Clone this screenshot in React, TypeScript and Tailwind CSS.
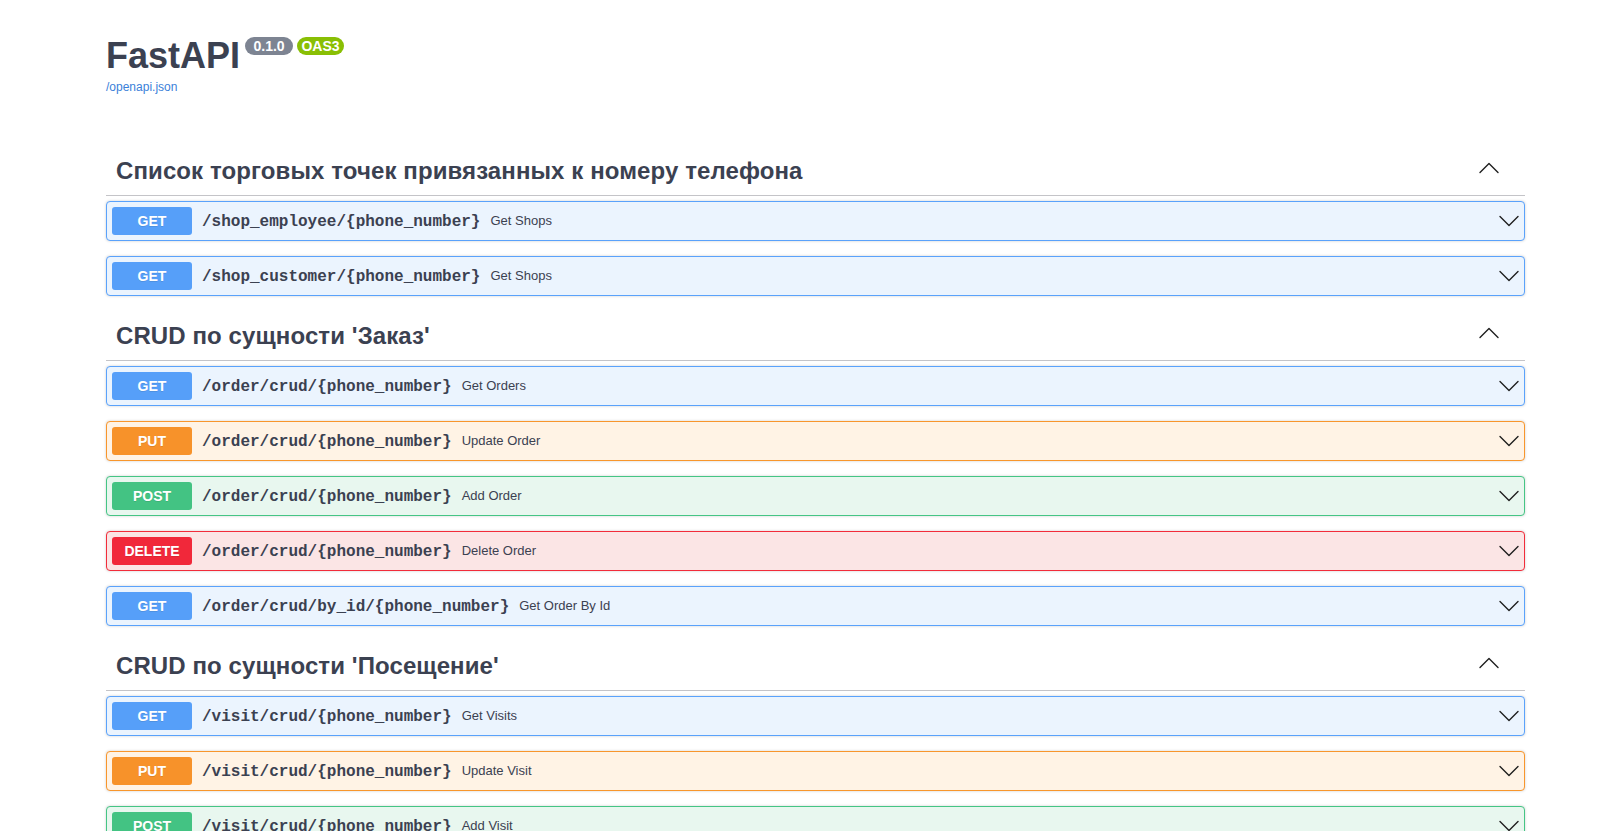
import React from "react";

type Method = "GET" | "PUT" | "POST" | "DELETE";

type Operation = {
  method: Method;
  path: string;
  summary: string;
};

type Tag = {
  title: string;
  ops: Operation[];
};

const METHOD_STYLES: Record<Method, { block: string; badge: string }> = {
  GET: { block: "border-[#5aa2fb] bg-[#ebf4fe]", badge: "bg-[#569ff9]" },
  PUT: { block: "border-[#f8962c] bg-[#fff3e5]", badge: "bg-[#f7922a]" },
  POST: { block: "border-[#45c585] bg-[#e8f7ef]", badge: "bg-[#43c383]" },
  DELETE: { block: "border-[#f22c3a] bg-[#fbe5e5]", badge: "bg-[#f1283a]" },
};

const TAGS: Tag[] = [
  {
    title: "Список торговых точек привязанных к номеру телефона",
    ops: [
      { method: "GET", path: "/shop_employee/{phone_number}", summary: "Get Shops" },
      { method: "GET", path: "/shop_customer/{phone_number}", summary: "Get Shops" },
    ],
  },
  {
    title: "CRUD по сущности 'Заказ'",
    ops: [
      { method: "GET", path: "/order/crud/{phone_number}", summary: "Get Orders" },
      { method: "PUT", path: "/order/crud/{phone_number}", summary: "Update Order" },
      { method: "POST", path: "/order/crud/{phone_number}", summary: "Add Order" },
      { method: "DELETE", path: "/order/crud/{phone_number}", summary: "Delete Order" },
      { method: "GET", path: "/order/crud/by_id/{phone_number}", summary: "Get Order By Id" },
    ],
  },
  {
    title: "CRUD по сущности 'Посещение'",
    ops: [
      { method: "GET", path: "/visit/crud/{phone_number}", summary: "Get Visits" },
      { method: "PUT", path: "/visit/crud/{phone_number}", summary: "Update Visit" },
      { method: "POST", path: "/visit/crud/{phone_number}", summary: "Add Visit" },
      { method: "DELETE", path: "/visit/crud/{phone_number}", summary: "Delete Visit" },
    ],
  },
];

function Chevron({ up }: { up?: boolean }) {
  return (
    <svg width="20" height="20" viewBox="0 0 20 20" fill="none" className="shrink-0">
      <polyline
        points={up ? "1,14.5 10,5.5 19,14.5" : "1,5.5 10,14.5 19,5.5"}
        stroke="#1f1f1f"
        strokeWidth="1.4"
        strokeLinecap="round"
        strokeLinejoin="round"
      />
    </svg>
  );
}

function OperationRow({ op }: { op: Operation }) {
  const style = METHOD_STYLES[op.method];
  return (
    <div
      className={`mb-[15px] flex h-[40px] items-center rounded-[4px] border p-[5px] shadow-[0_0_3px_rgba(0,0,0,0.19)] ${style.block}`}
    >
      <span
        className={`flex h-[28px] w-[80px] shrink-0 items-center justify-center rounded-[3px] text-[14px] font-bold text-white [text-shadow:0_1px_0_rgba(0,0,0,0.1)] ${style.badge}`}
      >
        {op.method}
      </span>
      <span className="px-[10px] pt-[2px] font-['Liberation_Mono',monospace] text-[16px] font-bold text-[#3b4151]">
        {op.path}
      </span>
      <span className="flex-1 text-[13px] text-[#3b4151]">{op.summary}</span>
      <Chevron />
    </div>
  );
}

function TagSection({ tag }: { tag: Tag }) {
  return (
    <section>
      <h3 className="mb-[5px] flex h-[50px] items-center border-b border-[#c4c4c8] pr-[26px] pl-[10px]">
        <span className="flex-1 text-[24px] font-bold tracking-[0.1px] text-[#3b4151]">{tag.title}</span>
        <span className="mb-[5px]">
          <Chevron up />
        </span>
      </h3>
      {tag.ops.map((op, i) => (
        <OperationRow key={i} op={op} />
      ))}
    </section>
  );
}

export default function App() {
  return (
    <div className="h-[831px] overflow-hidden bg-white font-['Liberation_Sans',Arial,sans-serif]">
      <div className="ml-[106px] w-[1419px]">
        <div className="pt-[35px]">
          <h2 className="flex items-start">
            <span className="text-[36px] leading-[41px] font-bold text-[#3b4151]">FastAPI</span>
            <span className="mt-[2px] ml-[5px] flex h-[18px] w-[48px] items-center justify-center rounded-full bg-[#7d8492] text-[14px] font-bold text-white">
              0.1.0
            </span>
            <span className="mt-[2px] ml-[4px] flex h-[18px] w-[47px] items-center justify-center rounded-full bg-[#89bf04] text-[14px] font-bold text-white">
              OAS3
            </span>
          </h2>
          <a href="#" className="mt-[4px] block text-[12px] leading-[14px] text-[#3b7fd9]">
            /openapi.json
          </a>
        </div>
        <div className="mt-[52px]">
          {TAGS.map((tag, i) => (
            <TagSection key={i} tag={tag} />
          ))}
        </div>
      </div>
    </div>
  );
}
